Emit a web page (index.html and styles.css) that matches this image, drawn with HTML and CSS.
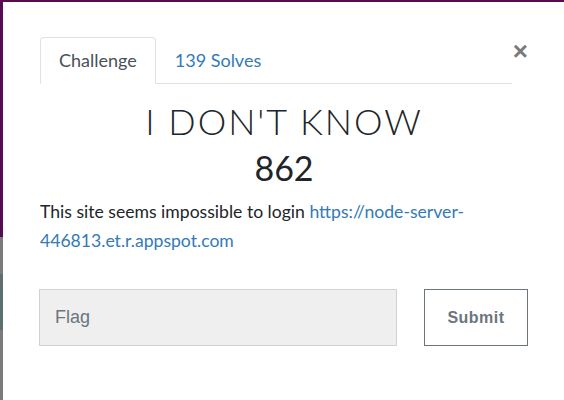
FILE: index.html
```html
<!DOCTYPE html>
<html>
<head>
<meta charset="utf-8">
<link rel="stylesheet" href="styles.css">
</head>
<body>
<div class="page">
  <div class="strip">
    <div class="seg seg-purple"></div>
    <div class="seg seg-gray1"></div>
    <div class="seg seg-teal"></div>
    <div class="seg seg-gray2"></div>
  </div>
  <div class="modal">
    <div class="header">
      <ul class="tabs">
        <li class="tab active">Challenge</li>
        <li class="tab link">139 Solves</li>
      </ul>
      <button class="close" aria-label="Close">&times;</button>
    </div>
    <h2 class="name">I DON'T KNOW</h2>
    <h3 class="value">862</h3>
    <p class="desc">This site seems impossible to login <a href="#">https://node-server-446813.et.r.appspot.com</a></p>
    <form class="flag-row">
      <input class="flag-input" type="text" placeholder="Flag">
      <button class="submit" type="button">Submit</button>
    </form>
  </div>
</div>
</body>
</html>
```

FILE: styles.css
```css
* { box-sizing: border-box; }
html, body { margin: 0; padding: 0; }
body {
  width: 564px;
  height: 400px;
  overflow: hidden;
  background: #560b52;
  font-family: Lato, "Liberation Sans", sans-serif;
}
.page {
  display: flex;
  height: 400px;
}
.strip {
  width: 3px;
  display: flex;
  flex-direction: column;
}
.seg-purple { height: 237px; background: #560b52; }
.seg-gray1 { height: 37px; background: #7b7b7b; }
.seg-teal { height: 56px; background: #5c7070; }
.seg-gray2 { flex: 1; background: #7b7b7b; }
.modal {
  flex: 1;
  margin-top: 2px;
  background: #fff;
  padding: 35px 36px 0 37px;
}
.header {
  display: flex;
  align-items: flex-start;
}
.tabs {
  flex: 1;
  display: flex;
  list-style: none;
  margin: 0;
  padding: 0;
  border-bottom: 1px solid #dee2e6;
}
.tab {
  font-size: 18px;
  line-height: 27px;
  padding: 9px 18px;
  margin-bottom: -1px;
  border: 1px solid transparent;
  border-top-left-radius: 4px;
  border-top-right-radius: 4px;
}
.tab.active {
  color: #495057;
  border-color: #dee2e6 #dee2e6 #fff;
  background: #fff;
}
.tab.link {
  color: #337ab7;
}
.close {
  width: 16px;
  margin: 4px 0 0 0;
  padding: 0;
  border: 0;
  background: none;
  font-family: "Liberation Sans", sans-serif;
  font-size: 26px;
  font-weight: bold;
  line-height: 20px;
  color: #7a7a7a;
  text-align: right;
}
.name {
  margin: 15px 0 0;
  text-align: center;
  font-size: 36px;
  font-weight: 300;
  letter-spacing: 2px;
  line-height: 44px;
  color: #212529;
}
.value {
  margin: 5px 0 0;
  text-align: center;
  font-size: 34px;
  font-weight: 400;
  line-height: 40px;
  color: #212529;
}
.desc {
  margin: 10px 0 0;
  font-size: 17.6px;
  line-height: 28.5px;
  color: #212529;
}
.desc a {
  color: #337ab7;
  text-decoration: none;
}
.flag-row {
  display: flex;
  gap: 27px;
  margin-top: 34px;
}
.flag-input {
  flex: 1;
  height: 57px;
  margin: 0 0 0 -1px;
  padding: 0 15px;
  background: #efefef;
  border: 1px solid #d2d2d2;
  font-family: "Liberation Sans", sans-serif;
  font-size: 18px;
  color: #495057;
}
.flag-input::placeholder { color: #6c757d; }
.submit {
  width: 104px;
  height: 57px;
  background: #fff;
  border: 1px solid #6c757d;
  font-family: "Liberation Sans", sans-serif;
  font-size: 16px;
  font-weight: bold;
  letter-spacing: 0.5px;
  color: #6c757d;
}
```
